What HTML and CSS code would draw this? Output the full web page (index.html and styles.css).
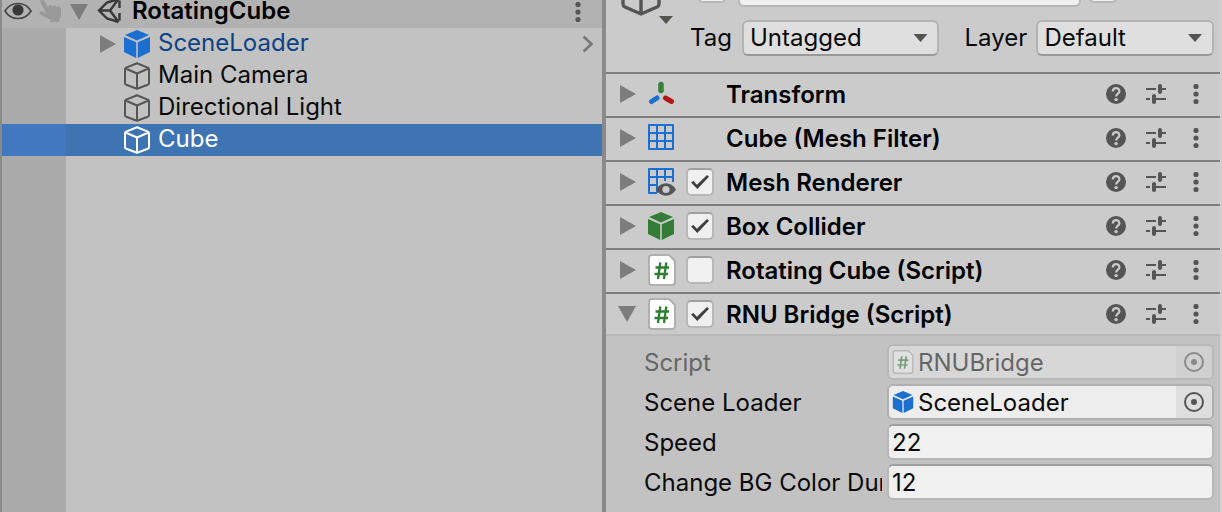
FILE: index.html
```
<!DOCTYPE html>
<html lang="en">
<head>
<meta charset="utf-8">
<title>RotatingCube</title>
<link rel="stylesheet" href="styles.css">
</head>
<body>
<svg class="sprite" aria-hidden="true">
  <symbol id="cube-solid" viewBox="0 0 28 28"><path d="M14 0 26 5 14 10.500 2 5zM1 7 13.200 12.300V28L1 22zM27 7 14.800 12.300V28L27 22z" fill="currentColor"/></symbol>
  <symbol id="cube-line" viewBox="0 0 28 28"><path d="M14 1.200 24.800 5.600q1.200.5 1.200 1.600v14q0 1-1.200 1.500L14 26.800 3.200 22.700Q2 22.200 2 21.200v-14q0-1.100 1.200-1.600zM2.500 6.500 14 11.500l11.500-5M14 11.500v15" fill="none" stroke="currentColor" stroke-width="2" stroke-linejoin="round"/></symbol>
  <symbol id="script" viewBox="0 0 28 32"><path d="M4 1h17l6 6v21a3 3 0 0 1-3 3H4a3 3 0 0 1-3-3V4a3 3 0 0 1 3-3z" fill="#fff" stroke="#b0b0b0" stroke-width="2"/><path d="M12.300 8.500 10 25M18.300 8.500 16 25M7.500 13.500h13.500M6.500 20h13.500" stroke="#2f7d32" stroke-width="2.300" fill="none"/></symbol>
  <symbol id="help" viewBox="0 0 20 20"><circle cx="10" cy="10" r="10" fill="#555"/><path d="M6.800 7.500C6.800 3 13.400 3 13.400 7.200c0 2.500-3.200 2.500-3.200 5.300" fill="none" stroke="#cbcbcb" stroke-width="2.200"/><circle cx="10.100" cy="15.600" r="1.700" fill="#cbcbcb"/></symbol>
  <symbol id="preset" viewBox="0 0 20 20"><path d="M0 5h10M14 5h6M0 15h4M8 15h12" stroke="#555" stroke-width="2"/><path d="M14 2v6M8 12v6" stroke="#555" stroke-width="4" stroke-linecap="round"/></symbol>
  <symbol id="dots" viewBox="0 0 6 20"><g fill="currentColor"><circle cx="3" cy="2.500" r="2.600"/><circle cx="3" cy="10" r="2.600"/><circle cx="3" cy="17.500" r="2.600"/></g></symbol>
  <symbol id="right" viewBox="0 0 16 18"><path d="M0 0 16 9 0 18z" fill="#7d7d7d"/></symbol>
  <symbol id="down" viewBox="0 0 18 16"><path d="M0 0h18L9 16z" fill="#7d7d7d"/></symbol>
  <symbol id="target" viewBox="0 0 20 20"><circle cx="10" cy="10" r="9" fill="none" stroke="#555" stroke-width="2"/><circle cx="10" cy="10" r="3" fill="#555"/></symbol>
</svg>
<main class="editor">
  <section class="hierarchy" aria-label="Hierarchy">
    <header class="row scene">
      <span class="gutter">
        <svg class="eye" viewBox="0 0 28 18"><path d="M1 9C7-1 21-1 27 9 21 19 7 19 1 9z" fill="none" stroke="#444" stroke-width="1.600"/><circle cx="14" cy="8" r="5.600" fill="#383838"/></svg>
        <svg class="hand" viewBox="0 0 24 24"><path d="M1.500 1c1.500-1.500 3-1 4 1l3.500 6.500c0-3 3.500-3.500 4.500-1 1-1.500 3.500-1.200 4 .5 1.500-1 4-.5 4.500 2v7.500l-1.500 2V23h-9l-.500-2.500L1 15.500c-1.500-2.500 1-4 3-3l3 1.500L1.500 3.500z" fill="#999"/></svg>
      </span>
      <svg class="fold down"><use href="#down"/></svg>
      <svg class="unity" viewBox="0 0 24 26"><path d="M21.500 2 10 5.500 2 13.500l8 8L21.500 25M22.500 3.500V11M22.500 16v7.500M2 13.500h11M21.500 2 13 13.500 21.500 25" fill="none" stroke="#383838" stroke-width="2.400"/></svg>
      <h1 class="title">RotatingCube</h1>
      <button class="icon-btn" aria-label="Scene menu"><svg class="dots"><use href="#dots"/></svg></button>
    </header>
    <ul class="tree">
      <li class="row prefab"><span class="gutter"></span><svg class="fold"><use href="#right"/></svg><svg class="cube blue"><use href="#cube-solid"/></svg><span class="label">SceneLoader</span><button class="icon-btn" aria-label="Open prefab"><svg class="chevron" viewBox="0 0 12 18"><path d="m1.500 1.500 8 7.500-8 7.500" fill="none" stroke="#777" stroke-width="2.600"/></svg></button></li>
      <li class="row"><span class="gutter"></span><span class="fold"></span><svg class="cube"><use href="#cube-line"/></svg><span class="label">Main Camera</span></li>
      <li class="row"><span class="gutter"></span><span class="fold"></span><svg class="cube"><use href="#cube-line"/></svg><span class="label">Directional Light</span></li>
      <li class="row selected"><span class="gutter"></span><span class="fold"></span><svg class="cube"><use href="#cube-line"/></svg><span class="label">Cube</span></li>
    </ul>
    <div class="empty"><span class="gutter"></span></div>
  </section>
  <section class="inspector" aria-label="Inspector">
    <header class="object">
      <div class="object-icon"><svg class="big-cube" viewBox="0 0 40 44"><path d="M20 2 38 10v22q0 2-2 3L20 42 4 35q-2-1-2-3V10zM2 10l18 8 18-8M20 18v24" fill="none" stroke="#555" stroke-width="3.400" stroke-linejoin="round"/></svg><svg class="caret" viewBox="0 0 14 8"><path d="M0 0h14L7 8z" fill="#555550"/></svg></div>
      <div class="object-fields">
        <div class="name-row"><input class="check" type="checkbox" aria-label="Active"><input class="field name" type="text" value="Cube" aria-label="Name"><input class="check" type="checkbox" aria-label="Static"></div>
        <div class="tag-row">
          <label for="tag">Tag</label><span class="select"><select id="tag"><option>Untagged</option></select></span>
          <label for="layer">Layer</label><span class="select"><select id="layer"><option>Default</option></select></span>
        </div>
      </div>
    </header>
    <article class="component"><svg class="fold"><use href="#right"/></svg><svg class="comp-icon" viewBox="0 0 28 28"><g stroke-linecap="round" stroke-width="5"><path d="M14 4.500v6" stroke="#378039" stroke-width="5.500"/><path d="m10 18-5.500 3.500" stroke="#1b6fd0"/><path d="m18.500 18 6 3.500" stroke="#b51518"/></g></svg><span class="slot"></span><h2 class="title">Transform</h2><div class="tools"><button class="icon-btn" aria-label="Help"><svg class="tool"><use href="#help"/></svg></button><button class="icon-btn" aria-label="Presets"><svg class="tool"><use href="#preset"/></svg></button><button class="icon-btn" aria-label="Menu"><svg class="dots"><use href="#dots"/></svg></button></div></article>
    <article class="component"><svg class="fold"><use href="#right"/></svg><svg class="comp-icon" viewBox="0 0 28 28"><path d="M2 1h24v24H2zM10 1v24M18 1v24M2 9h24M2 17h24" fill="none" stroke="#1b6fd0" stroke-width="2" stroke-linejoin="round"/></svg><span class="slot"></span><h2 class="title">Cube (Mesh Filter)</h2><div class="tools"><button class="icon-btn" aria-label="Help"><svg class="tool"><use href="#help"/></svg></button><button class="icon-btn" aria-label="Presets"><svg class="tool"><use href="#preset"/></svg></button><button class="icon-btn" aria-label="Menu"><svg class="dots"><use href="#dots"/></svg></button></div></article>
    <article class="component"><svg class="fold"><use href="#right"/></svg><svg class="comp-icon" viewBox="0 0 28 28"><path d="M10 25H2V1h24v13M10 1v24M18 1v12M2 9h24M2 17h9" fill="none" stroke="#1b6fd0" stroke-width="2" stroke-linejoin="round"/><path d="M9 21.500c5-8.300 15-8.300 20 0-5 8.300-15 8.300-20 0z" fill="#555"/><circle cx="19" cy="21.500" r="3.600" fill="#cbcbcb"/></svg><input class="check" type="checkbox" checked aria-label="Enable Mesh Renderer"><h2 class="title">Mesh Renderer</h2><div class="tools"><button class="icon-btn" aria-label="Help"><svg class="tool"><use href="#help"/></svg></button><button class="icon-btn" aria-label="Presets"><svg class="tool"><use href="#preset"/></svg></button><button class="icon-btn" aria-label="Menu"><svg class="dots"><use href="#dots"/></svg></button></div></article>
    <article class="component"><svg class="fold"><use href="#right"/></svg><svg class="comp-icon green"><use href="#cube-solid"/></svg><input class="check" type="checkbox" checked aria-label="Enable Box Collider"><h2 class="title">Box Collider</h2><div class="tools"><button class="icon-btn" aria-label="Help"><svg class="tool"><use href="#help"/></svg></button><button class="icon-btn" aria-label="Presets"><svg class="tool"><use href="#preset"/></svg></button><button class="icon-btn" aria-label="Menu"><svg class="dots"><use href="#dots"/></svg></button></div></article>
    <article class="component"><svg class="fold"><use href="#right"/></svg><svg class="comp-icon page"><use href="#script"/></svg><input class="check" type="checkbox" aria-label="Enable Rotating Cube"><h2 class="title">Rotating Cube (Script)</h2><div class="tools"><button class="icon-btn" aria-label="Help"><svg class="tool"><use href="#help"/></svg></button><button class="icon-btn" aria-label="Presets"><svg class="tool"><use href="#preset"/></svg></button><button class="icon-btn" aria-label="Menu"><svg class="dots"><use href="#dots"/></svg></button></div></article>
    <article class="component open"><svg class="fold down"><use href="#down"/></svg><svg class="comp-icon page"><use href="#script"/></svg><input class="check" type="checkbox" checked aria-label="Enable RNU Bridge"><h2 class="title">RNU Bridge (Script)</h2><div class="tools"><button class="icon-btn" aria-label="Help"><svg class="tool"><use href="#help"/></svg></button><button class="icon-btn" aria-label="Presets"><svg class="tool"><use href="#preset"/></svg></button><button class="icon-btn" aria-label="Menu"><svg class="dots"><use href="#dots"/></svg></button></div></article>
    <div class="props">
      <span class="prop-label muted">Script</span>
      <div class="object-field disabled"><svg class="mini"><use href="#script"/></svg><span class="value">RNUBridge</span><button class="picker" disabled aria-label="Select script"><svg class="tool"><use href="#target"/></svg></button></div>
      <span class="prop-label">Scene Loader</span>
      <div class="object-field"><svg class="mini blue"><use href="#cube-solid"/></svg><span class="value">SceneLoader</span><button class="picker" aria-label="Select scene loader"><svg class="tool"><use href="#target"/></svg></button></div>
      <label class="prop-label" for="speed">Speed</label>
      <input class="field" id="speed" type="text" value="22">
      <label class="prop-label" for="duration">Change BG Color Duration</label>
      <input class="field" id="duration" type="text" value="12">
    </div>
  </section>
</main>
</body>
</html>
```
FILE: styles.css
```
* { box-sizing: border-box; }
body { margin: 0; background: #c2c2c2; color: #090909; font: 24px/32px Inter, sans-serif; }
button, input, select { font: inherit; color: inherit; }
svg { display: block; flex: none; }
.sprite { position: absolute; width: 0; height: 0; }
.editor { display: grid; grid-template-columns: 606fr 616fr; min-height: 100vh; overflow: hidden; }
.title { margin: 0; font-size: 24px; font-weight: 600; white-space: nowrap; color: #000; }
.icon-btn { display: flex; align-items: center; justify-content: center; width: 20px; height: 20px; padding: 0; border: 0; background: none; color: #555; }
.dots { width: 6px; height: 20px; }
.tool { width: 20px; height: 20px; }
.fold { flex: none; width: 16px; height: 18px; }
.fold.down { width: 18px; height: 16px; }
.blue { color: #1b6fd0; }
.green { color: #347d37; }

.hierarchy { display: flex; flex-direction: column; min-width: 0; margin-top: -4px; border-left: 2px solid #8a8a8a; border-right: 4px solid #8a8a8a; }
.row { display: flex; align-items: center; height: 32px; }
.row .icon-btn { margin-left: auto; margin-right: 4px; }
.gutter { display: flex; flex: none; align-items: center; align-self: stretch; width: 64px; background: #aaa; }
.tree { margin: 0; padding: 0; list-style: none; }
.tree .fold { margin: 0 7px 0 34px; }
.tree .label { margin-left: 7px; padding-bottom: 2px; white-space: nowrap; }
.cube { width: 28px; height: 28px; color: #555; }
.cube.blue { color: #1b6fd0; }
.prefab .label { color: #0d4387; }
.chevron { width: 12px; height: 18px; }
.scene { background: #b2b2b2; }
.scene .gutter { gap: 7px; padding-left: 2px; background: none; }
.scene .gutter svg { margin-bottom: 2px; }
.scene .fold { margin: 0 9px 0 4px; }
.scene .title { margin-left: 11px; padding-bottom: 2px; }
.scene .icon-btn { margin-right: 14px; }
.eye { width: 28px; height: 18px; }
.hand { width: 24px; height: 24px; }
.unity { width: 24px; height: 26px; margin-bottom: 4px; }
.selected, .selected .cube { color: #fff; }
.selected { background: #3e74b1; }
.selected .gutter { background: #4278c0; }
.empty { display: flex; flex: 1; }

.inspector { min-width: 0; border-right: 2px solid #d0d0d0; }
.object { display: flex; margin-top: -29px; padding: 0 6px 16px 15px; background: #cbcbcb; }
.object-icon { display: flex; width: 53px; align-items: flex-end; align-self: flex-start; }
.big-cube { width: 40px; height: 46px; }
.caret { width: 14px; height: 8px; margin-left: -2px; margin-bottom: -7px; }
.object-fields { flex: 1; min-width: 0; }
.name-row { display: flex; gap: 8px; height: 36px; padding: 0 97px 0 24px; }
.name-row .check { margin-top: 4px; }
.name-row .check:first-child { margin-right: 4px; }
.tag-row { display: grid; grid-template-columns: 52px 198fr 97px 178fr; align-items: center; margin-top: 13px; padding-left: 16px; }
.tag-row label[for="layer"] { padding-left: 25px; }
.select { display: grid; align-items: center; }
.select::after { content: ""; grid-area: 1 / 1; justify-self: end; width: 14px; height: 8px; margin-right: 12px; background: #555550; clip-path: polygon(0 0, 100% 0, 50% 100%); pointer-events: none; }
select { grid-area: 1 / 1; min-width: 0; width: 100%; height: 36px; padding: 0 6px; border: 2px solid #b3b3b3; border-bottom-color: #999; border-radius: 6px; appearance: none; background: #dfdfdf; }
.check { appearance: none; flex: none; display: grid; place-items: center; width: 28px; height: 28px; margin: 0; border: 2px solid #b7b7b7; border-top-color: #a0a0a0; border-radius: 5px; background: #f0f0f0; }
.check:checked::before { content: ""; width: 18px; height: 14px; background: #404040; clip-path: polygon(0 54%, 13% 42%, 33% 70%, 89% 0, 100% 12%, 35% 100%); }
.field { min-width: 0; width: 100%; height: 36px; padding: 1px 3px 0; border: 2px solid #b7b7b7; border-top-color: #a0a0a0; border-radius: 6px; background: #f0f0f0; }
.field.name { flex: 1; padding-top: 4px; border-color: #b7b7b7; }

.component { display: flex; align-items: center; height: 44px; padding: 0 14px 2px; border-top: 2px solid #7f7f7f; background: #cbcbcb; }
.component.open { height: 42px; padding-bottom: 0; }
.component .fold { margin-right: 11px; }
.component .fold.down { margin-left: -2px; }
.component .title { padding-top: 2px; }
.comp-icon { width: 28px; height: 28px; overflow: visible; }
.comp-icon.page { width: 30px; height: 32px; margin-right: -2px; }
.component .check, .slot { flex: none; width: 28px; margin: 0 12px 0 11px; }
.tools { display: flex; gap: 20px; margin-left: auto; }
.props { display: grid; grid-template-columns: 238px 1fr; column-gap: 5px; row-gap: 4px; align-items: center; padding: 8px 6px 12px 38px; border-top: 2px solid #b9b9b9; }
.prop-label { overflow: hidden; padding-top: 2px; white-space: nowrap; }
.muted { color: #666; }
.object-field { display: flex; align-items: center; height: 36px; padding-left: 3px; border: 2px solid #b0b0b0; border-radius: 6px; overflow: hidden; background: #ededed; }
.mini { width: 22px; height: 24px; }
.value { flex: 1; margin-left: 4px; padding-top: 2px; }
.picker { display: flex; align-items: center; justify-content: center; align-self: stretch; width: 36px; padding: 0; border: 0; background: #dedede; }
.disabled { opacity: .5; }
```
